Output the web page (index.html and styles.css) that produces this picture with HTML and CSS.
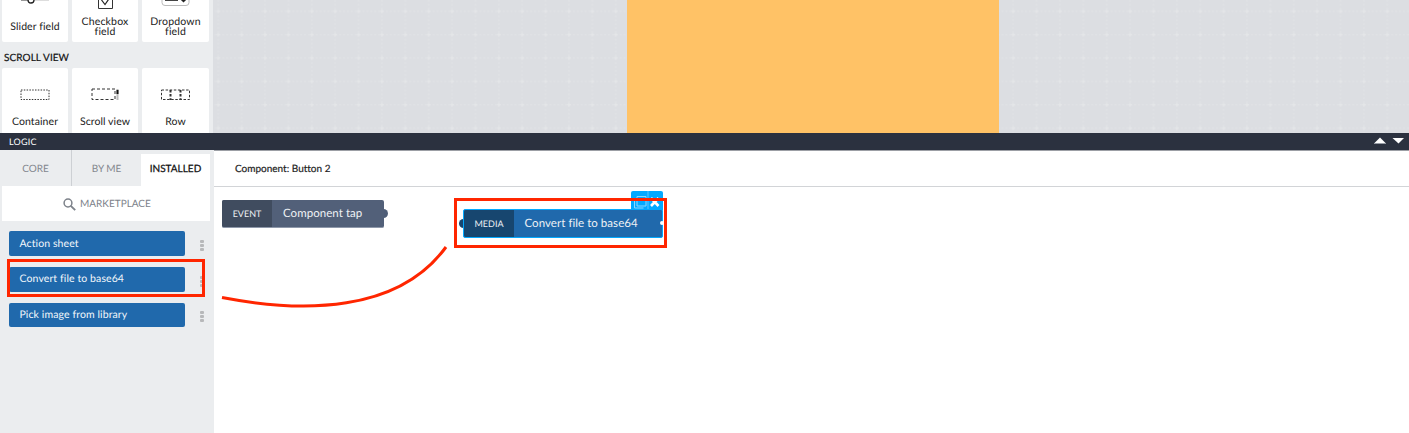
FILE: index.html
```html
<!DOCTYPE html>
<html lang="en">
<head>
<meta charset="utf-8">
<title>Logic editor</title>
<link rel="stylesheet" href="styles.css">
</head>
<body>
<div class="app">
  <section class="designer">
    <aside class="palette">
      <div class="tiles tiles-fields">
        <div class="tile">
          <svg class="tile-icon" width="40" height="14" viewBox="0 0 40 14"><path d="M19 0h15" stroke="#bbb"/><path d="M6 0h8" stroke="#333"/><path d="M13 0a3 3 0 0 0 6 0" fill="none" stroke="#222" stroke-width="1.3"/></svg>
          <span class="label t-slider">Slider field</span>
        </div>
        <div class="tile">
          <svg class="tile-icon" width="40" height="14" viewBox="0 0 40 14"><path d="M13.500-6v14.500h14V-6" fill="none" stroke="#333"/><path d="M16.500 0l3.500 4.500 3.500-5" fill="none" stroke="#222" stroke-width="1.200"/></svg>
          <span class="label two t-check">Checkbox<br>field</span>
        </div>
        <div class="tile">
          <svg class="tile-icon" width="40" height="14" viewBox="0 0 40 14"><rect x="6" y="-12" width="27" height="17.500" rx="3" fill="none" stroke="#bbb"/><path d="M9 .5h13" stroke="#444"/><path d="M25 -1l2.500 2.500 2.500-2.500" fill="none" stroke="#222" stroke-width="1.500"/></svg>
          <span class="label two t-drop">Dropdown<br>field</span>
        </div>
      </div>
      <h2 class="group-title"><span class="t-scrollhead">SCROLL VIEW</span></h2>
      <div class="tiles tiles-scroll">
        <div class="tile">
          <svg class="tile-icon" width="40" height="16" viewBox="0 0 40 16"><rect x="6" y="4" width="28" height="9.500" fill="none" stroke="#333" stroke-dasharray="1.500 1.300"/></svg>
          <span class="label t-container">Container</span>
        </div>
        <div class="tile">
          <svg class="tile-icon" width="40" height="16" viewBox="0 0 40 16"><rect x="7" y="3" width="23" height="10.500" fill="none" stroke="#333" stroke-dasharray="3 2"/><path d="M32.500 3v11" stroke="#bbb" stroke-width="2"/><path d="M32.500 4v4" stroke="#111" stroke-width="2"/></svg>
          <span class="label t-scroll">Scroll view</span>
        </div>
        <div class="tile">
          <svg class="tile-icon" width="40" height="16" viewBox="0 0 40 16"><g fill="none" stroke="#333" stroke-dasharray="2.500 1.600"><rect x="5.500" y="4" width="28" height="9.500"/><path d="M14.500 4v10M24.500 4v10" stroke-width="2"/></g></svg>
          <span class="label t-row">Row</span>
        </div>
      </div>
    </aside>
    <main class="canvas">
      <svg class="grid" width="1196" height="133">
        <defs><pattern id="grid" x="-6.400" y="-.2" width="23.380" height="23.380" patternUnits="userSpaceOnUse"><path d="M0 11.500h23.400M11.700 0v23.400" stroke="#e1e3e6" stroke-dasharray="2 1.900" fill="none"/><path d="M10 11.500h3.400M11.700 9.800v3.400" stroke="#e5e7e9"/></pattern></defs>
        <rect width="1196" height="133" fill="url(#grid)"/>
        <rect x="414" width="372" height="133" fill="#ffc266"/>
      </svg>
    </main>
  </section>

  <header class="logic-bar">
    <span class="t-logic">LOGIC</span>
    <svg class="arrows" width="30" height="8" viewBox="0 0 30 8"><path d="M0 6.500L6 .5l6 6z" fill="#fff"/><path d="M0 6.500h12" stroke="#969ba4"/><path d="M18.500 1h11.500l-5.500 5.500z" fill="#fff"/></svg>
  </header>

  <section class="logic">
    <aside class="library">
      <nav class="tabs">
        <div class="tab"><span class="t-core">CORE</span></div>
        <div class="tab"><span class="t-byme">BY ME</span></div>
        <div class="tab active"><span class="t-installed">INSTALLED</span></div>
      </nav>
      <div class="market">
        <svg width="13" height="13" viewBox="0 0 13 13"><circle cx="5" cy="5" r="3.900" fill="none" stroke="#7d828a" stroke-width="1.500"/><path d="M7.800 7.800l4.400 4.400" stroke="#7d828a" stroke-width="1.900"/></svg>
        <span class="t-market">MARKETPLACE</span>
      </div>
      <div class="functions">
        <div class="fn-row"><div class="fn"><span class="t-action">Action sheet</span></div><div class="dots"><i></i><i></i><i></i></div></div>
        <div class="fn-row"><div class="fn"><span class="t-convert">Convert file to base64</span></div><div class="dots"><i></i><i></i><i></i></div></div>
        <div class="fn-row last"><div class="fn"><span class="t-pick">Pick image from library</span></div><div class="dots"><i></i><i></i><i></i></div></div>
      </div>
    </aside>
    <div class="workspace">
      <div class="context"><span class="t-context">Component: Button 2</span></div>
      <div class="flow">
        <b class="port out"></b>
        <div class="node event">
          <div class="kind"><span class="t-event">EVENT</span></div>
          <div class="name"><span class="t-tap">Component tap</span></div>
        </div>
        <div class="node-tools">
          <svg width="31" height="19" viewBox="0 0 31 19"><path d="M17 0v19" stroke="#5cc4ff"/><path d="M6 5.500h9v9.500h-9z M3.500 7.500v9.500h9" fill="none" stroke="#8cd7ff"/><path d="M20 7l7.500 8M27.500 7l-7.500 8" stroke="#fff" stroke-width="2.600"/></svg>
        </div>
        <b class="port in"></b>
        <div class="node media">
          <div class="kind"><span class="t-media">MEDIA</span></div>
          <div class="name"><span class="t-node">Convert file to base64</span></div>
          <b class="port notch"></b>
        </div>
      </div>
    </div>
  </section>
  <div class="mark mark-list"></div>
  <div class="mark mark-node"></div>
  <svg class="stroke" width="240" height="80" viewBox="0 0 240 80"><path d="M7 62.500C88 78 183 78 231 12" fill="none" stroke="#ff2600" stroke-width="3"/></svg>
</div>
</body>
</html>
```

FILE: styles.css
```css
* { box-sizing: border-box; }
body { margin: 0; background: #fff; color: #222; font-family: Lato, "Open Sans", sans-serif; font-size: 10.5px; text-rendering: geometricPrecision; font-variant-ligatures: none; }
.app { position: relative; width: 1409px; height: 433px; overflow: hidden; display: flex; flex-direction: column; }
svg { display: block; flex: none; }
span { white-space: nowrap; }

.designer { height: 133px; display: flex; overflow: hidden; }
.palette { width: 213px; flex: none; background: #ebedef; }
.tiles { display: grid; grid-template-columns: 66px 66px 67px; gap: 4px; padding-left: 2px; }
.tile { background: #fff; border-radius: 2px; display: flex; flex-direction: column; align-items: center; overflow: hidden; }
.tiles-fields .tile { height: 42px; border-radius: 0 0 2px 2px; }
.tiles-scroll .tile { height: 66px; padding-top: 18px; }
.label { line-height: 16px; margin-top: 5px; text-align: center; }
.label.two { line-height: 10px; margin-top: 3px; letter-spacing: .15px; }
.tiles-scroll .label { margin-top: 12px; }
.group-title { margin: 0; height: 26px; padding: 8px 0 0 4px; font-size: 10px; line-height: 16px; font-weight: 400; color: #111; letter-spacing: .08px; -webkit-text-stroke: .2px; }
.canvas { flex: 1; background: #dcdee2; }

.logic-bar { height: 18px; background: #2b313f; border-bottom: 1px solid #9c9fa5; color: #fff; display: flex; align-items: center; justify-content: space-between; padding: 0 5px 0 9px; }
.arrows { margin-top: -1px; }

.logic { flex: 1; display: flex; }
.library { width: 214px; margin-top: -1px; background: #ebedef; position: relative; }
.tabs { display: grid; grid-template-columns: 72px 69px 69px; height: 36px; }
.tab { display: flex; align-items: center; justify-content: center; color: #83878e; border-right: 1px solid #cdd0d4; padding-top: 2px; }
.tab:nth-child(2) { border: 0; }
.tab.active { margin-top: 4px; background: #fff; color: #111; border: 0; padding: 0 0 2px; -webkit-text-stroke: .25px; }
.market { width: 208px; height: 35px; margin-left: 2px; background: #fff; color: #7d828a; display: flex; align-items: center; padding: 1px 0 0 61px; gap: 4px; }
.functions { padding: 10px 0 0 9px; display: flex; flex-direction: column; gap: 11px; }
.fn-row { display: flex; align-items: center; height: 25px; gap: 15px; }
.fn { width: 176px; height: 25px; border-radius: 2px; background: #2069ac; color: #f2f7fb; display: flex; align-items: center; padding: 0 0 0 10.500px; letter-spacing: .1px; }
.fn-row:nth-child(2) .fn { padding-bottom: 1px; }
.fn-row.last { height: 24px; }
.last .fn { height: 24px; }
.dots { display: flex; flex-direction: column; gap: 1px; padding-top: 3px; }
.dots i { width: 4px; height: 3px; border-radius: 1px; background: #b7b8ba; }

.workspace { flex: 1; background: #fff; }
.context { height: 36px; border-bottom: 1px solid #d2d4d7; display: flex; align-items: center; padding: 1px 0 0 21px; -webkit-text-stroke: .2px; }
.flow { position: relative; height: 246px; }
.node { position: absolute; display: flex; height: 28px; border-radius: 2px; color: #eef1f5; }
.kind { display: flex; align-items: center; justify-content: center; width: 50px; border-radius: 2px 0 0 2px; }
.name { flex: 1; display: flex; align-items: center; padding: 0 0 1px 11px; }
.event { left: 8px; top: 13px; width: 162px; background: #526079; border-bottom: 1px solid #8e98aa; }
.event .kind { background: #404c5f; }
.media { left: 249px; top: 22px; width: 200px; height: 29px; background: #2069ac; border: 1px solid #03a9ff; }
.media .kind { background: #17466f; }
.media .name { padding-left: 10.500px; }
.port { position: absolute; width: 9px; height: 9px; border-radius: 50%; }
.port.out { left: 165px; top: 22px; background: #4f5e78; }
.port.in { left: 245px; top: 32px; background: #17466f; }
.port.notch { right: -2px; top: 11px; background: #fff; width: 4px; height: 4px; }
.node-tools { position: absolute; left: 417px; top: 4px; width: 32px; height: 19px; background: #03a9ff; border-radius: 2px 2px 0 0; }

.mark { position: absolute; border: 3px solid #ff2600; }
.mark-list { left: 7px; top: 259px; width: 198px; height: 38px; }
.mark-node { left: 454px; top: 198px; width: 213px; height: 50px; }
.stroke { position: absolute; left: 215px; top: 235px; }

.t-slider, .t-container, .t-scroll { letter-spacing: .08px; }
.t-logic { font-size: 9px; letter-spacing: .2px; }
.t-core, .t-byme, .t-installed, .t-market { font-size: 10px; }
.t-context { font-size: 10px; }
.t-event, .t-media { font-size: 9px; }
.t-tap, .t-node { font-size: 11.5px; letter-spacing: .05px; }
```
